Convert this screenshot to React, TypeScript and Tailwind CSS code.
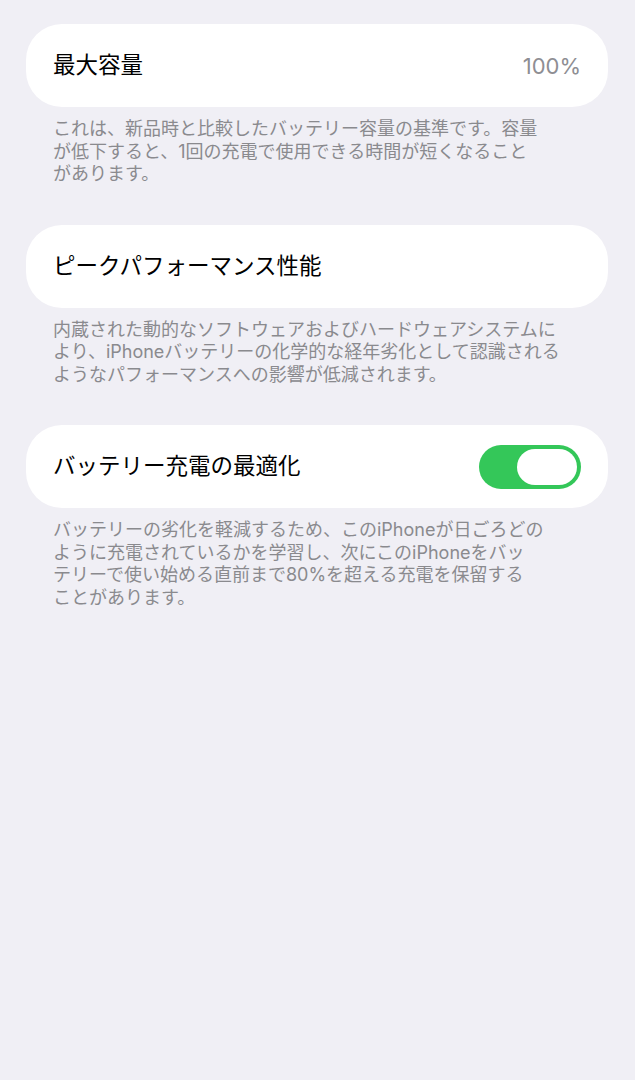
const FONT = "font-['Inter','Noto_Sans_CJK_JP',sans-serif]";

function Toggle({ on }: { on: boolean }) {
  return (
    <div
      className={`flex h-[44px] w-[102px] items-center rounded-full p-[4px] ${
        on ? "justify-end bg-[#34c759]" : "justify-start bg-[#e9e9ea]"
      }`}
    >
      <div className="h-[36px] w-[60px] rounded-full bg-white shadow-[0_0_0_1px_rgba(52,199,89,0.35)]" />
    </div>
  );
}

function Row({ title, value, toggle }: { title: string; value?: string; toggle?: boolean }) {
  return (
    <div className="flex h-[83px] items-center justify-between rounded-[36px] bg-white pl-[27px] pr-[27px]">
      <span className="text-[22.5px] leading-none text-black">{title}</span>
      {value && <span className="text-[22px] leading-none text-[#8e8e93]">{value}</span>}
      {toggle !== undefined && <Toggle on={toggle} />}
    </div>
  );
}

function Footer({ lines }: { lines: string[] }) {
  return (
    <p className="mt-[11px] pl-[27px] text-[18px] leading-[22.5px] text-[#8a8a8e]">
      {lines.map((l, i) => (
        <span key={i} className="block whitespace-nowrap">
          {l}
        </span>
      ))}
    </p>
  );
}

export default function App() {
  return (
    <div className={`min-h-[1080px] w-full bg-[#f0eff5] pl-[26px] pr-[27px] pt-[24px] ${FONT}`}>
      <section>
        <Row title="最大容量" value="100%" />
        <Footer
          lines={[
            "これは、新品時と比較したバッテリー容量の基準です。容量",
            "が低下すると、1回の充電で使用できる時間が短くなること",
            "があります。",
          ]}
        />
      </section>

      <section className="mt-[39px]">
        <Row title="ピークパフォーマンス性能" />
        <Footer
          lines={[
            "内蔵された動的なソフトウェアおよびハードウェアシステムに",
            "より、iPhoneバッテリーの化学的な経年劣化として認識される",
            "ようなパフォーマンスへの影響が低減されます。",
          ]}
        />
      </section>

      <section className="mt-[39px]">
        <Row title="バッテリー充電の最適化" toggle={true} />
        <Footer
          lines={[
            "バッテリーの劣化を軽減するため、このiPhoneが日ごろどの",
            "ように充電されているかを学習し、次にこのiPhoneをバッ",
            "テリーで使い始める直前まで80%を超える充電を保留する",
            "ことがあります。",
          ]}
        />
      </section>
    </div>
  );
}
